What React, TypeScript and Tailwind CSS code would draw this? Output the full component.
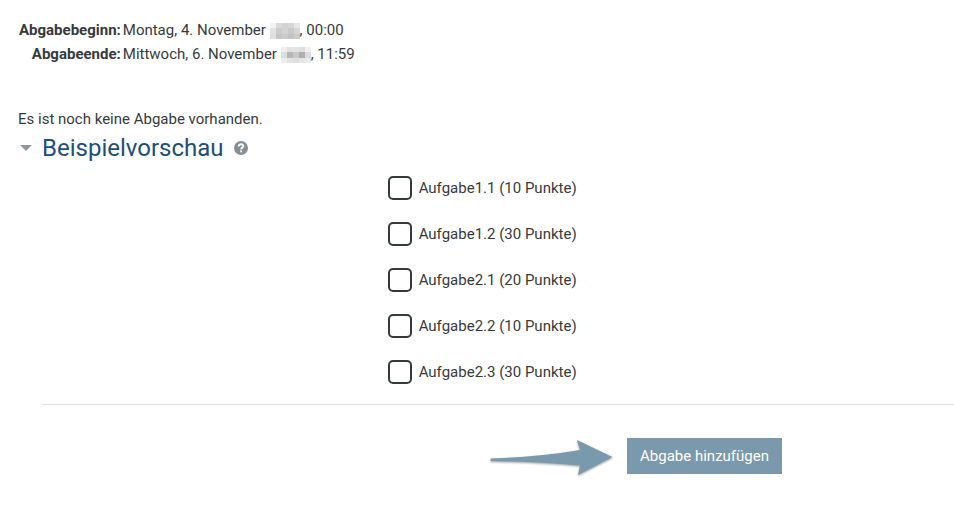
import { useState } from 'react';

const tasks = [
  { id: '1.1', points: 10 },
  { id: '1.2', points: 30 },
  { id: '2.1', points: 20 },
  { id: '2.2', points: 10 },
  { id: '2.3', points: 30 },
];

const beginMosaic = [
  '#f3f3f3', '#d9d9d9', '#d3d3d3', '#d6d6d6', '#e6e6e6',
  '#e2e2e2', '#cccccc', '#d2d2d2', '#c9c9c9', '#d5d5d5',
  '#e0e0e0', '#c6c6c6', '#cacaca', '#c3c3c3', '#cdcdcd',
];

const endMosaic = [
  '#ededed', '#e2e2e2', '#e4e4e4', '#dedede', '#efefef',
  '#dddddd', '#b4b5b6', '#c8c8c9', '#adaeaf', '#dcdcdc',
  '#ececec', '#e2e2e2', '#dedede', '#e5e5e5', '#e9e9e9',
];

function Mosaic({ colors }: { colors: string[] }) {
  return (
    <span className="inline-grid h-4 w-[30px] grid-cols-5 grid-rows-3 align-middle" aria-hidden="true">
      {colors.map((color, i) => (
        <span key={i} style={{ backgroundColor: color }} />
      ))}
    </span>
  );
}

export default function App() {
  const [open, setOpen] = useState(true);
  const [checked, setChecked] = useState<string[]>([]);

  const toggle = (id: string) => {
    setChecked((prev) => (prev.includes(id) ? prev.filter((c) => c !== id) : [...prev, id]));
  };

  return (
    <main className="bg-white pt-[18px] pb-10 pl-[18px] font-['Roboto',sans-serif] text-[15px] leading-6 text-[#373a3c]">
      {/* Submission period */}
      <table>
        <tbody>
          <tr>
            <th scope="row" className="pr-0.5 pl-px text-right font-bold">Abgabebeginn:</th>
            <td>
              Montag, 4. November <Mosaic colors={beginMosaic} />, 00:00
            </td>
          </tr>
          <tr>
            <th scope="row" className="pr-0.5 pl-px text-right font-bold">Abgabeende:</th>
            <td>
              Mittwoch, 6. November <Mosaic colors={endMosaic} />, 11:59
            </td>
          </tr>
        </tbody>
      </table>

      <p className="mt-[41px]">Es ist noch keine Abgabe vorhanden.</p>

      {/* Example preview */}
      <section>
        <div className="flex h-[34px] items-center">
          <h2 className="text-2xl text-[#1d4f7c]">
            <button type="button" aria-expanded={open} onClick={() => setOpen(!open)} className="flex items-center">
              <svg className="mr-2.5 ml-0.5 h-1.5 w-3" viewBox="0 0 12 6" fill="#929799">
                <path d="M0 0h12L6 6z" />
              </svg>
              Beispielvorschau
            </button>
          </h2>
          <button type="button" aria-label="Hilfe" className="ml-2.5">
            <svg className="h-3.5 w-3.5" viewBox="0 0 14 14">
              <circle cx="7" cy="7" r="7" fill="#868e96" />
              <path d="M4.8 5.5C4.9 2.5 9.4 2.7 9.3 5.2C9.2 6.7 7.1 6.6 7.1 8.3" fill="none" stroke="#fff" strokeWidth="1.9" />
              <path d="M6.1 9.4h2v1.9h-2z" fill="#fff" />
            </svg>
          </button>
        </div>

        {open && (
          <div className="ml-6 border-b border-[#dee0e2] pt-[11px] pb-5">
            <div className="ml-[37.9%] flex flex-col items-start gap-[22px]">
              {tasks.map((task) => (
                <label key={task.id} className="flex h-6 items-center gap-[7px]">
                  <input
                    type="checkbox"
                    checked={checked.includes(task.id)}
                    onChange={() => toggle(task.id)}
                    className="h-6 w-6 appearance-none rounded-[5px] border-2 border-[#373a3c] bg-white checked:bg-[#7a99ac]"
                  />
                  Aufgabe{task.id} ({task.points} Punkte)
                </label>
              ))}
            </div>
          </div>
        )}
      </section>

      <div className="mt-[31px] mr-[172px] flex items-center justify-end gap-3">
        <svg className="h-10 w-[126px] overflow-visible" viewBox="0 0 126 40">
          <g className="drop-shadow-[0_1px_1px_rgba(0,0,0,0.4)]">
            <path d="M2 22.5Q50 21 91 14L88 4L123.5 21L89 39L91 29.5Q50 25.5 2 25Q1 23.5 2 22.5Z" fill="#7a99ac" />
          </g>
        </svg>
        <button type="button" className="h-9 bg-[#7a99ac] px-[13px] text-white">
          Abgabe hinzufügen
        </button>
      </div>
    </main>
  );
}
